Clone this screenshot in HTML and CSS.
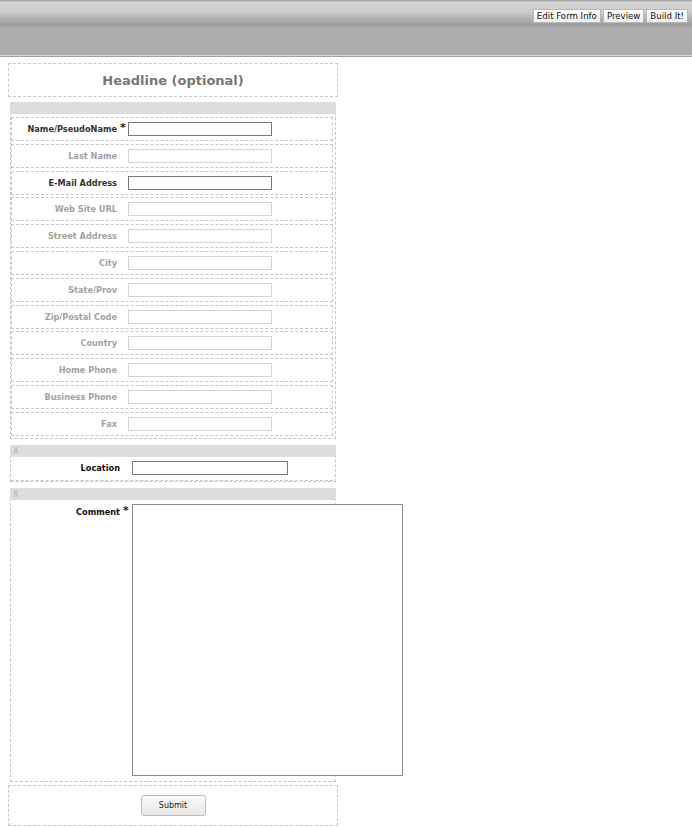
FILE: index.html
```html
<!DOCTYPE html>
<html>
<head>
<meta charset="utf-8">
<link rel="stylesheet" href="styles.css">
</head>
<body>
<div class="header">
  <div class="toolbar">
    <button class="tb-btn">Edit Form Info</button>
    <button class="tb-btn">Preview</button>
    <button class="tb-btn">Build It!</button>
  </div>
  <div class="subbar"></div>
</div>

<div class="form">
  <div class="headline">Headline (optional)</div>

  <div class="section contact">
    <div class="band"></div>
    <div class="rows">
      <div class="row"><span class="lbl req">Name/PseudoName</span><span class="star">*</span><span class="field req"></span></div>
      <div class="row"><span class="lbl">Last Name</span><span class="star"></span><span class="field"></span></div>
      <div class="row"><span class="lbl req">E-Mail Address</span><span class="star"></span><span class="field req"></span></div>
      <div class="row"><span class="lbl">Web Site URL</span><span class="star"></span><span class="field"></span></div>
      <div class="row"><span class="lbl">Street Address</span><span class="star"></span><span class="field"></span></div>
      <div class="row"><span class="lbl">City</span><span class="star"></span><span class="field"></span></div>
      <div class="row"><span class="lbl">State/Prov</span><span class="star"></span><span class="field"></span></div>
      <div class="row"><span class="lbl">Zip/Postal Code</span><span class="star"></span><span class="field"></span></div>
      <div class="row"><span class="lbl">Country</span><span class="star"></span><span class="field"></span></div>
      <div class="row"><span class="lbl">Home Phone</span><span class="star"></span><span class="field"></span></div>
      <div class="row"><span class="lbl">Business Phone</span><span class="star"></span><span class="field"></span></div>
      <div class="row"><span class="lbl">Fax</span><span class="star"></span><span class="field"></span></div>
    </div>
  </div>

  <div class="section single">
    <div class="band"><span class="x">X</span></div>
    <div class="srow"><span class="slbl">Location</span><span class="sstar"></span><span class="sfield"></span></div>
  </div>

  <div class="section single">
    <div class="band"><span class="x">X</span></div>
    <div class="srow comment"><span class="slbl">Comment</span><span class="sstar">*</span><span class="textarea"></span></div>
  </div>

  <div class="submit-box">
    <button class="submit">Submit</button>
  </div>
</div>
</body>
</html>
```

FILE: styles.css
```css
html, body {
  margin: 0;
  padding: 0;
  background: #fff;
  font-family: "DejaVu Sans", Verdana, sans-serif;
}

.header {
  height: 57px;
  background: linear-gradient(to bottom,
    #a8a8a8 0, #a8a8a8 1px,
    #d8d8d8 2px, #cacaca 12px, #a4a4a4 23px,
    #9c9c9c 24px, #a8a8a8 27px, #adadad 30px, #adadad 55px,
    #d4d4d4 55px, #d4d4d4 56px, #a0a0a0 56px, #a0a0a0 57px);
}

.toolbar {
  height: 24px;
  display: flex;
  justify-content: flex-end;
  align-items: flex-start;
  gap: 2px;
  padding: 9px 4px 0 0;
  box-sizing: border-box;
}

.tb-btn {
  margin: 0;
  height: 14px;
  padding: 0 3px;
  font-family: "DejaVu Sans", Verdana, sans-serif;
  font-size: 8.6px;
  line-height: 12px;
  color: #111;
  background: linear-gradient(#ffffff, #eeeeee);
  border: 1px solid #b8b8b8;
  border-radius: 0;
}

.form {
  width: 330px;
  margin: 6px 0 0 8px;
}

.headline {
  height: 34px;
  box-sizing: border-box;
  border: 1px dashed #c8c8c8;
  text-align: center;
  font-size: 13px;
  line-height: 33px;
  font-weight: bold;
  color: #777;
}

.section {
  margin: 5px 2px 0 2px;
  border: 1px dashed #c8c8c8;
  border-top: none;
}

.band {
  height: 12px;
  margin: 0 -1px;
  background: #dddddd;
  position: relative;
}

.x {
  position: absolute;
  left: 3px;
  top: 2px;
  font-size: 8px;
  line-height: 10px;
  color: #b0b0b0;
}

.rows {
  padding: 3px 2px 2px 0;
}

.row {
  height: 24px;
  box-sizing: border-box;
  border: 1px dashed #c8c8c8;
  margin-top: 2.8px;
  display: flex;
  align-items: center;
}

.row:first-child {
  margin-top: 0;
}

.lbl {
  flex: none;
  width: 105px;
  text-align: right;
  font-size: 8.2px;
  font-weight: bold;
  color: #a3a3a3;
}

.lbl.req {
  color: #333;
}

.star {
  flex: none;
  width: 11px;
  box-sizing: border-box;
  padding-left: 3px;
  font-size: 11px;
  line-height: 10px;
  font-weight: bold;
  color: #222;
  position: relative;
  top: -1px;
}

.field {
  flex: none;
  width: 144px;
  height: 14px;
  box-sizing: border-box;
  border: 1px solid #d4d4d4;
  background: #fff;
}

.field.req {
  border-color: #7a7a7a;
}

.single {
  margin-top: 6px;
}

.srow {
  height: 24px;
  box-sizing: border-box;
  border-bottom: 1px dashed #c8c8c8;
  margin-right: 2px;
  display: flex;
  align-items: center;
}

.slbl {
  flex: none;
  width: 109px;
  text-align: right;
  font-size: 8.2px;
  font-weight: bold;
  color: #111;
}

.sstar {
  flex: none;
  width: 12px;
  box-sizing: border-box;
  padding-left: 3px;
  font-size: 11px;
  line-height: 10px;
  font-weight: bold;
  color: #222;
}

.sfield {
  flex: none;
  width: 156px;
  height: 14px;
  box-sizing: border-box;
  border: 1px solid #7a7a7a;
  background: #fff;
}

.srow.comment {
  height: 281px;
  align-items: flex-start;
  padding-top: 4px;
  border-bottom: none;
}

.srow.comment .slbl {
  padding-top: 3px;
}

.srow.comment .sstar {
  padding-top: 2px;
}

.textarea {
  flex: none;
  width: 271px;
  height: 272px;
  box-sizing: border-box;
  border: 1px solid #8a8a8a;
  background: #fff;
}

.submit-box {
  margin-top: 3px;
  height: 41px;
  box-sizing: border-box;
  border: 1px dashed #c8c8c8;
  display: flex;
  align-items: center;
  justify-content: center;
}

.submit {
  width: 65px;
  height: 21px;
  margin: 0;
  padding: 0;
  font-family: "DejaVu Sans", Verdana, sans-serif;
  font-size: 8px;
  color: #222;
  background: linear-gradient(#fbfbfb, #e6e6e6);
  border: 1px solid #bdbdbd;
  border-radius: 3px;
}
```
